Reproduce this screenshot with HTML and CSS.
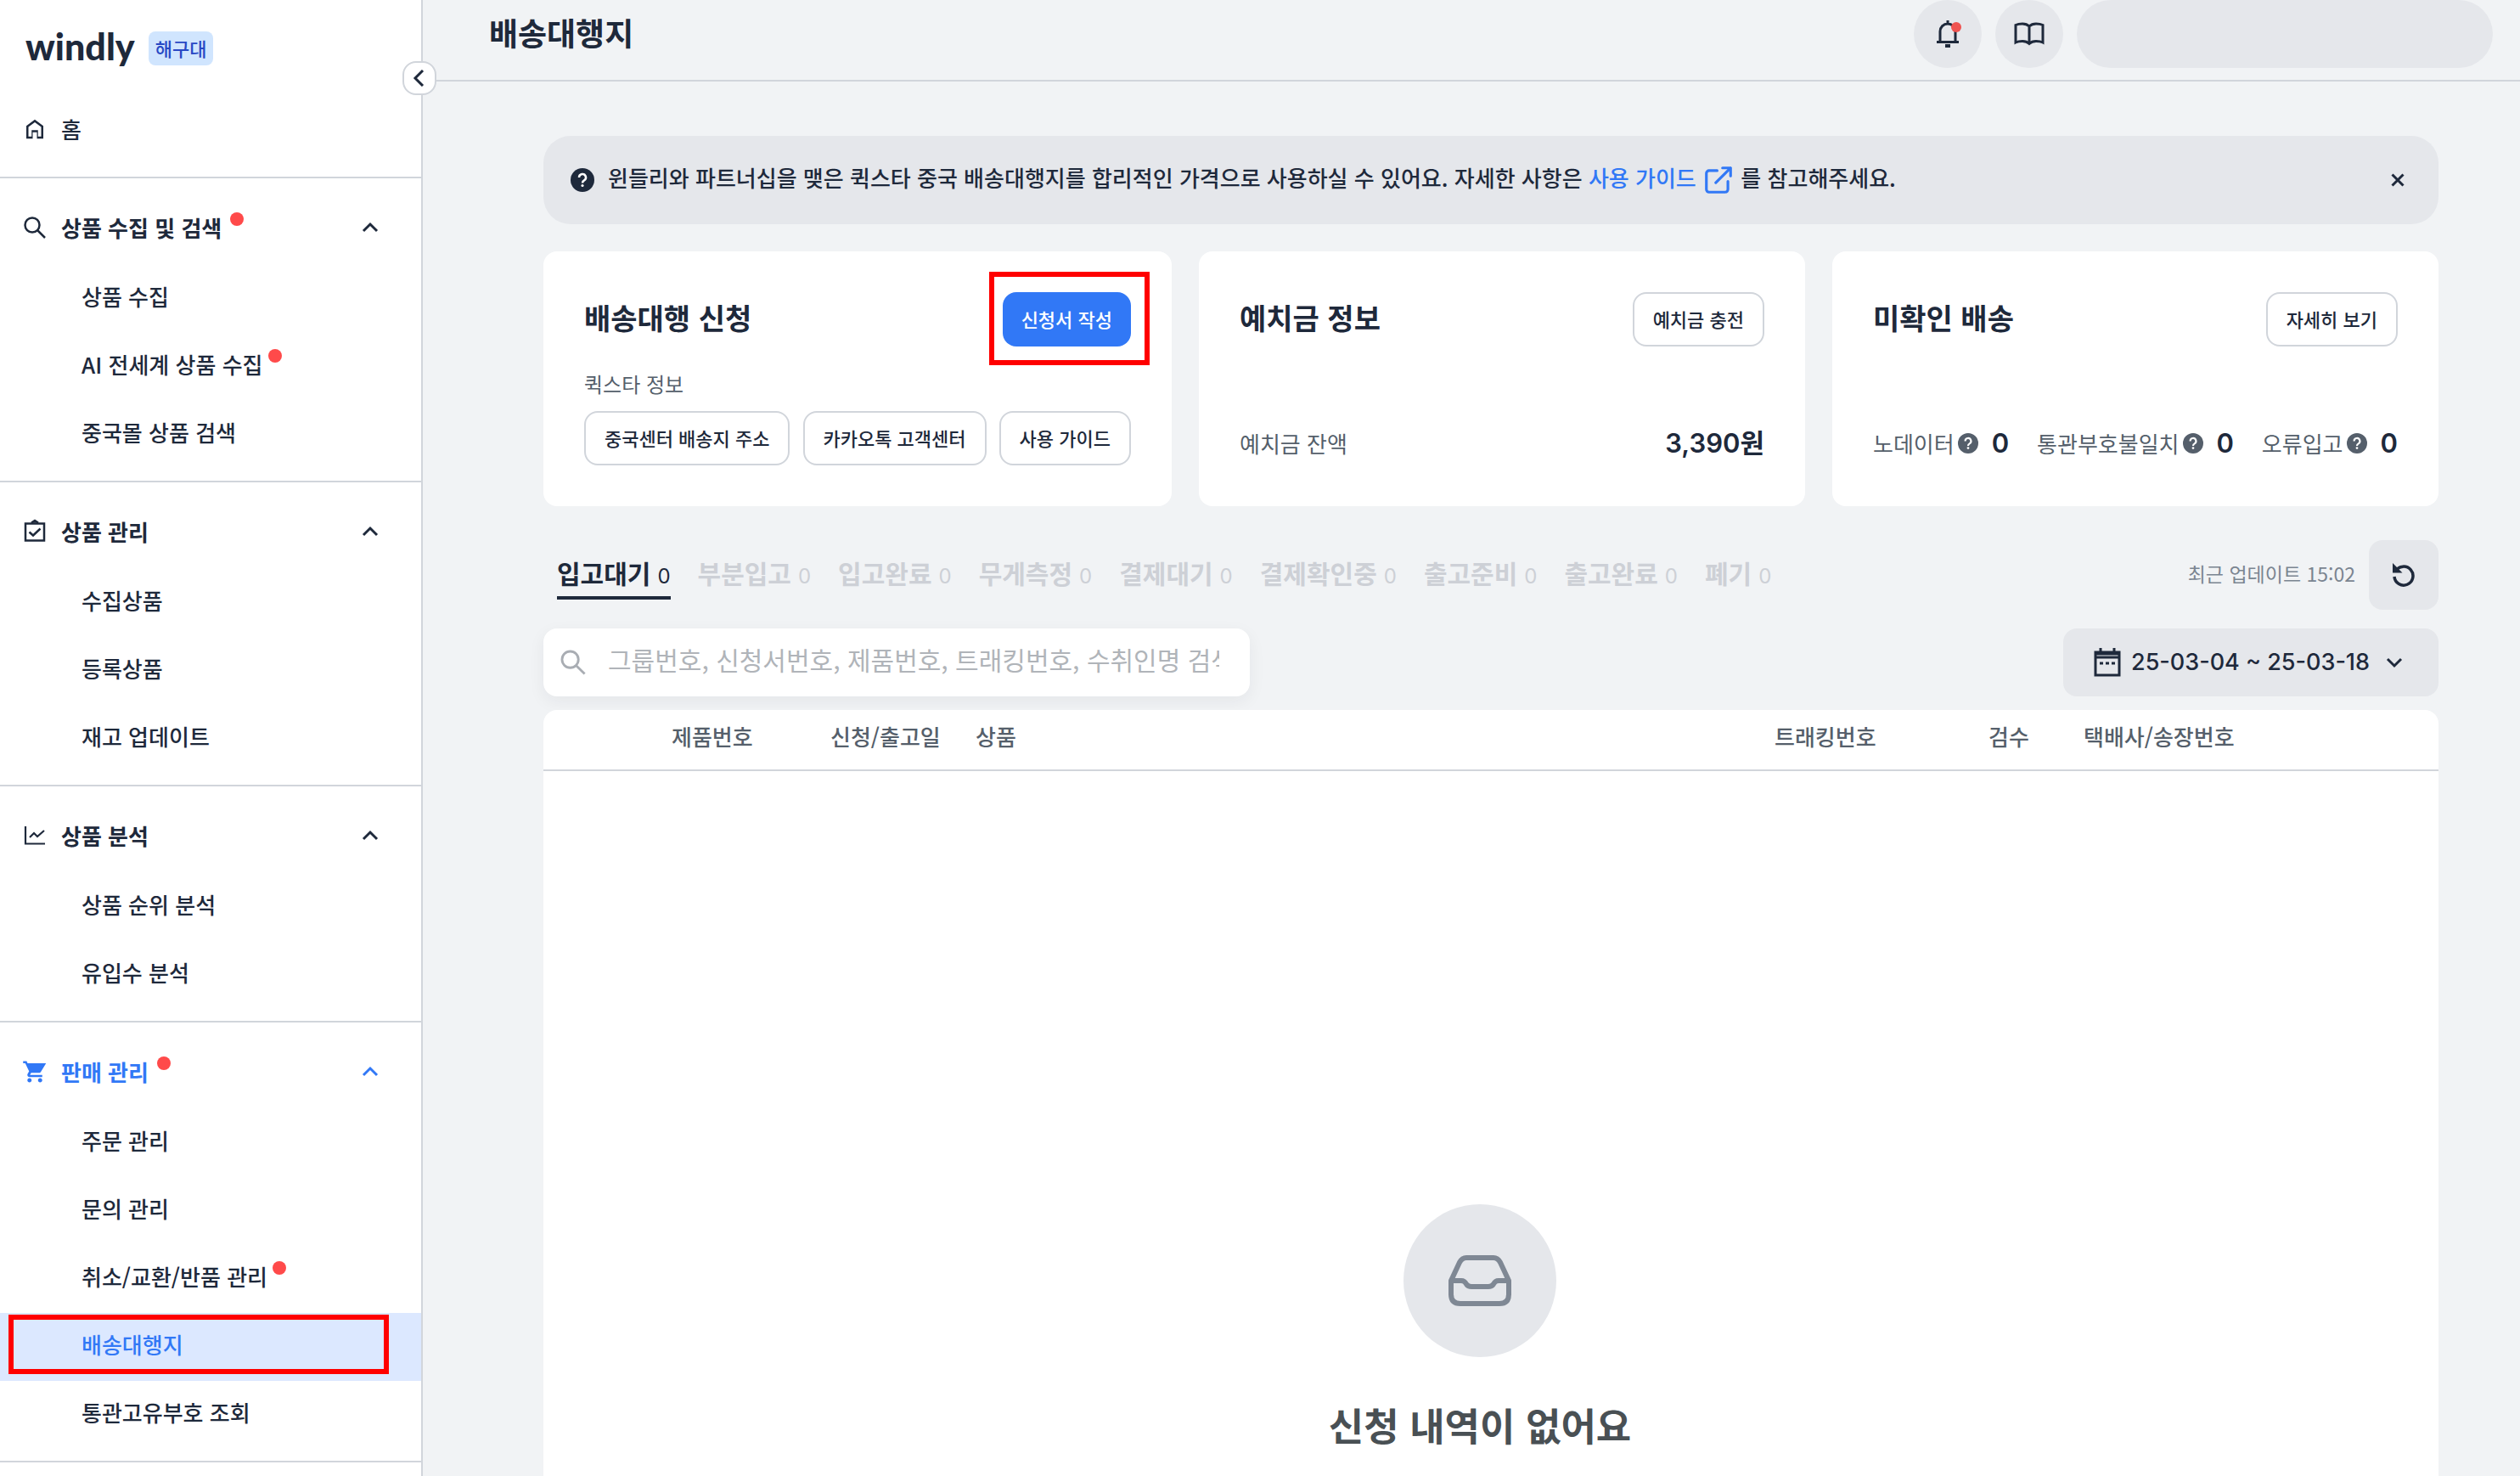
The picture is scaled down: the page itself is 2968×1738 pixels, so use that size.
FILE: index.html
```html
<!DOCTYPE html>
<html lang="ko">
<head>
    <meta charset="UTF-8">
    <meta name="viewport" content="width=device-width, initial-scale=1.0">
    <title>배송대행지 | windly</title>
    <link rel="stylesheet" href="styles.css">
</head>
<body>

<!-- Shared icons -->
<svg width="0" height="0" class="sprite" aria-hidden="true">
    <symbol id="chevron" viewBox="0 0 20 20">
        <path d="M2 14l8-8 8 8" fill="none" stroke="currentColor" stroke-width="3"/>
    </symbol>
    <symbol id="search" viewBox="0 0 30 30">
        <circle cx="12" cy="12" r="8.5" fill="none" stroke="currentColor" stroke-width="2.5"/>
        <path d="M18 18l9 9" fill="none" stroke="currentColor" stroke-width="2.5"/>
    </symbol>
    <symbol id="help" viewBox="0 0 28 28">
        <circle cx="14" cy="14" r="14" fill="currentColor"/>
        <path d="M10 11a4 4 0 1 1 6 3.400q-2 1.200-2 3" fill="none" stroke="#fff" stroke-width="2.500"/>
        <circle cx="14" cy="20.500" r="1.600" fill="#fff"/>
    </symbol>
</svg>

<aside class="sidebar">
    <div class="brand">
        <a href="#" class="logo">windly</a>
        <span class="badge">해구대</span>
    </div>
    <button class="collapse" aria-label="메뉴 접기">
        <svg viewBox="0 0 20 20"><path d="M14 1l-9 9 9 9" fill="none" stroke="currentColor" stroke-width="3"/></svg>
    </button>
    <nav>
        <a href="#" class="menu-head home">
            <svg class="menu-icon" viewBox="0 0 24 24"><path fill="currentColor" d="M6 19h3v-6h6v6h3v-9l-6-4.500L6 10zm-2 2V9l8-6 8 6v12h-6v-6h-4v6z"/></svg>
            홈
        </a>

        <div class="menu-group">
            <button class="menu-head">
                <svg class="menu-icon"><use href="#search"/></svg>
                상품 수집 및 검색<i class="dot"></i>
                <svg class="chevron"><use href="#chevron"/></svg>
            </button>
            <a href="#" class="menu-item">상품 수집</a>
            <a href="#" class="menu-item">AI 전세계 상품 수집<i class="dot"></i></a>
            <a href="#" class="menu-item">중국몰 상품 검색</a>
        </div>

        <div class="menu-group">
            <button class="menu-head">
                <svg class="menu-icon" viewBox="0 0 30 30" fill="none" stroke="currentColor" stroke-width="2.500"><path d="M4 5.500h22v20H4z"/><path d="M8.500 15.500l4.500 4 8.500-8"/><path d="M11 4.500l4-2.500 4 2.500" fill="currentColor"/></svg>
                상품 관리
                <svg class="chevron"><use href="#chevron"/></svg>
            </button>
            <a href="#" class="menu-item">수집상품</a>
            <a href="#" class="menu-item">등록상품</a>
            <a href="#" class="menu-item">재고 업데이트</a>
        </div>

        <div class="menu-group">
            <button class="menu-head">
                <svg class="menu-icon" viewBox="0 0 30 30" fill="none" stroke="currentColor" stroke-width="2.200"><path d="M4 4v20.500h23"/><path d="M9 17l5-5 4 4 8-7"/></svg>
                상품 분석
                <svg class="chevron"><use href="#chevron"/></svg>
            </button>
            <a href="#" class="menu-item">상품 순위 분석</a>
            <a href="#" class="menu-item">유입수 분석</a>
        </div>

        <div class="menu-group">
            <button class="menu-head current">
                <svg class="menu-icon" viewBox="0 0 24 24"><path fill="currentColor" d="M7 18c-1.100 0-2 .9-2 2s.9 2 2 2 2-.9 2-2-.9-2-2-2zM1 2v2h2l3.600 7.590-1.350 2.450C4.520 15.370 5.480 17 7 17h12v-2H7.420l1.120-2h7.450c.75 0 1.410-.41 1.750-1.030L22.600 4H5.210l-.94-2H1zm16 16c-1.100 0-2 .9-2 2s.9 2 2 2 2-.9 2-2-.9-2-2-2z"/></svg>
                판매 관리<i class="dot"></i>
                <svg class="chevron"><use href="#chevron"/></svg>
            </button>
            <a href="#" class="menu-item">주문 관리</a>
            <a href="#" class="menu-item">문의 관리</a>
            <a href="#" class="menu-item">취소/교환/반품 관리<i class="dot"></i></a>
            <a href="#" class="menu-item selected">배송대행지<span class="marker"></span></a>
            <a href="#" class="menu-item">통관고유부호 조회</a>
        </div>

        <div class="menu-group"></div>
    </nav>
</aside>

<main>
    <header class="topbar">
        <h1>배송대행지</h1>
        <div class="topbar-actions">
            <button class="round-btn" aria-label="알림">
                <svg viewBox="0 0 36 36" fill="none" stroke="currentColor" stroke-width="3"><path d="M5 27.500h26M9 27V15a9 9 0 0 1 18 0v12M18 6V2"/><path d="M15 32h6" stroke-width="4"/><circle cx="28" cy="10" r="6" fill="#ef5350" stroke="none"/></svg>
            </button>
            <button class="round-btn" aria-label="가이드">
                <svg viewBox="0 0 36 36" fill="none" stroke="currentColor" stroke-width="3"><path d="M18 9v20M18 9q-3-3-8-3-5 0-8 1.500V28q3-1.500 8-1.500 5 0 8 3 3-3 8-3 5 0 8 1.500V7.500Q31 6 26 6q-5 0-8 3z"/></svg>
            </button>
            <button class="profile" aria-label="프로필"></button>
        </div>
    </header>

    <div class="content">
        <section class="notice">
            <svg class="notice-icon"><use href="#help"/></svg>
            <p>윈들리와 파트너십을 맺은 퀵스타 중국 배송대행지를 합리적인 가격으로 사용하실 수 있어요. 자세한 사항은 <a href="#">사용 가이드 <svg viewBox="0 0 24 24" fill="none" stroke="currentColor" stroke-width="2" stroke-linecap="round" stroke-linejoin="round"><path d="M11 5H5a2 2 0 0 0-2 2v12a2 2 0 0 0 2 2h12a2 2 0 0 0 2-2v-6M15 3h6v6M10 14L21 3"/></svg></a> 를 참고해주세요.</p>
            <button class="close" aria-label="닫기">
                <svg viewBox="0 0 16 16" stroke="currentColor" stroke-width="3"><path d="M1.500 1.500l13 13M14.500 1.500l-13 13"/></svg>
            </button>
        </section>

        <section class="cards">
            <article class="card">
                <div class="card-head">
                    <h2>배송대행 신청</h2>
                    <div class="marked">
                        <button class="btn primary">신청서 작성</button>
                        <span class="marker"></span>
                    </div>
                </div>
                <p class="card-sub">퀵스타 정보</p>
                <div class="btn-row">
                    <button class="btn">중국센터 배송지 주소</button>
                    <button class="btn">카카오톡 고객센터</button>
                    <button class="btn">사용 가이드</button>
                </div>
            </article>

            <article class="card">
                <div class="card-head">
                    <h2>예치금 정보</h2>
                    <button class="btn">예치금 충전</button>
                </div>
                <div class="stats">
                    <span>예치금 잔액</span>
                    <strong>3,390원</strong>
                </div>
            </article>

            <article class="card">
                <div class="card-head">
                    <h2>미확인 배송</h2>
                    <button class="btn">자세히 보기</button>
                </div>
                <div class="stats">
                    <div class="stat">노데이터<svg><use href="#help"/></svg><strong>0</strong></div>
                    <div class="stat">통관부호불일치<svg><use href="#help"/></svg><strong>0</strong></div>
                    <div class="stat">오류입고<svg><use href="#help"/></svg><strong>0</strong></div>
                </div>
            </article>
        </section>

        <div class="tab-row">
            <div class="tabs">
                <button class="tab active">입고대기<span>0</span></button>
                <button class="tab">부분입고<span>0</span></button>
                <button class="tab">입고완료<span>0</span></button>
                <button class="tab">무게측정<span>0</span></button>
                <button class="tab">결제대기<span>0</span></button>
                <button class="tab">결제확인중<span>0</span></button>
                <button class="tab">출고준비<span>0</span></button>
                <button class="tab">출고완료<span>0</span></button>
                <button class="tab">폐기<span>0</span></button>
            </div>
            <div class="updated">
                <span>최근 업데이트 15:02</span>
                <button class="refresh" aria-label="새로고침">
                    <svg viewBox="0 0 28 28" fill="none" stroke="currentColor" stroke-width="3.500"><path d="M4.500 9.500A11 11 0 1 1 3 16"/><path d="M1 0v11.500h11.500z" fill="currentColor" stroke="none"/></svg>
                </button>
            </div>
        </div>

        <div class="filter-row">
            <label class="search">
                <svg><use href="#search"/></svg>
                <input type="text" aria-label="검색" placeholder="그룹번호, 신청서번호, 제품번호, 트래킹번호, 수취인명 검색">
            </label>
            <button class="date">
                <svg class="calendar" viewBox="0 0 32 36" fill="none" stroke="currentColor" stroke-width="3"><path d="M2 6h28v27H2zM8 1v6M24 1v6M2 12h28"/><path d="M7 19h4M14 19h4M21 19h4"/><path d="M2 7.500h28" stroke-width="4"/></svg>
                25-03-04 ~ 25-03-18
                <svg class="chevron down"><use href="#chevron"/></svg>
            </button>
        </div>

        <section class="list">
            <table>
                <colgroup>
                    <col class="col-check"><col class="col-no"><col class="col-date"><col><col class="col-track"><col class="col-inspect"><col class="col-invoice">
                </colgroup>
                <thead>
                    <tr>
                        <th></th>
                        <th>제품번호</th>
                        <th>신청/출고일</th>
                        <th>상품</th>
                        <th>트래킹번호</th>
                        <th>검수</th>
                        <th>택배사/송장번호</th>
                    </tr>
                </thead>
            </table>
            <div class="empty">
                <div class="empty-icon">
                    <svg viewBox="0 0 74 62" fill="none" stroke="currentColor" stroke-width="6" stroke-linejoin="round"><path d="M3 31L13 9.500Q16 4 21 4h32q5 0 8 5.500L71 31v16q0 11-11 11H14Q3 58 3 47zM3 31h12q4 0 6 4 2 3 6 3h20q4 0 6-3 2-4 6-4h12"/></svg>
                </div>
                <p>신청 내역이 없어요</p>
            </div>
        </section>
    </div>
</main>

</body>
</html>
```
FILE: styles.css
```css
:root {
    --ink: #1e293b;
    --gray: #555f6b;
    --line: #d1d5db;
    --fill: #e5e7eb;
    --bg: #f1f3f5;
    --blue: #3178f6;
    --mark: #ff0000;
}

* { box-sizing: border-box; }

body {
    margin: 0;
    display: flex;
    min-height: 100vh;
    font-family: "Noto Sans CJK KR", "Noto Sans", sans-serif;
    font-size: 26px;
    font-weight: 500;
    line-height: 36px;
    color: var(--ink);
    background: var(--bg);
}

button, input {
    font: inherit;
    color: inherit;
    border: none;
    background: none;
    padding: 0;
}

button { cursor: pointer; }
a { color: inherit; text-decoration: none; }
h1, h2, p { margin: 0; }
svg { display: block; flex-shrink: 0; }
.sprite { position: absolute; }

/* --- SIDEBAR --- */
.sidebar {
    position: relative;
    width: 498px;
    flex-shrink: 0;
    background: #fff;
    border-right: 2px solid var(--line);
}

.brand {
    display: flex;
    align-items: center;
    gap: 16px;
    height: 110px;
    padding: 0 30px;
}

.logo {
    font-family: Lato, sans-serif;
    font-size: 43px;
    font-weight: 900;
}

.badge {
    padding: 0 8px;
    margin-top: 4px;
    font-size: 22px;
    line-height: 38px;
    padding-bottom: 2px;
    border-radius: 8px;
    color: #2848c4;
    background: #d0e5fe;
}

.collapse {
    position: absolute;
    top: 72px;
    right: -18px;
    display: flex;
    align-items: center;
    justify-content: center;
    width: 40px;
    height: 40px;
    border: 2px solid var(--line);
    border-radius: 16px;
    background: #fff;
}

.collapse svg { width: 20px; height: 20px; }

.menu-head {
    display: flex;
    align-items: center;
    width: 100%;
    height: 86px;
    padding: 0 50px 2px 26px;
    font-weight: 700;
}

.menu-head.home { margin-bottom: 12px; font-weight: 500; }
.menu-head.current { color: var(--blue); }

.menu-icon {
    width: 30px;
    height: 30px;
    margin-right: 16px;
}

.chevron { width: 20px; height: 20px; margin-left: auto; }
.chevron.down { transform: rotate(180deg); }

.dot {
    width: 16px;
    height: 16px;
    margin: 0 0 20px 6px;
    border-radius: 50%;
    background: #ff4a4a;
}

.menu-head .dot { margin-left: 10px; }

.menu-group {
    border-top: 2px solid var(--line);
    padding: 16px 0 14px;
}

.menu-item {
    position: relative;
    display: flex;
    align-items: center;
    height: 80px;
    padding: 0 0 6px 96px;
}

.menu-item.selected { color: var(--blue); background: #dce8ff; }

.marker {
    position: absolute;
    border: 6px solid var(--mark);
    pointer-events: none;
}

.menu-item .marker { inset: 2px 38px 8px 10px; }

/* --- TOP BAR --- */
main {
    flex: 1;
    min-width: 0;
    display: flex;
    flex-direction: column;
}

.topbar {
    display: flex;
    justify-content: space-between;
    height: 96px;
    padding: 0 32px 0 78px;
    border-bottom: 2px solid var(--line);
}

h1 { font-size: 37px; line-height: 76px; }

.topbar-actions { display: flex; gap: 16px; }

.round-btn, .profile {
    display: flex;
    align-items: center;
    justify-content: center;
    width: 80px;
    height: 80px;
    border-radius: 40px;
    background: var(--fill);
}

.round-btn svg { width: 36px; height: 36px; }
.profile { width: 490px; }

/* --- CONTENT --- */
.content {
    flex: 1;
    display: flex;
    flex-direction: column;
    padding: 64px 96px 0 142px;
}

.notice {
    display: flex;
    align-items: center;
    height: 104px;
    padding: 0 40px 0 32px;
    border-radius: 32px;
    background: var(--fill);
}

.notice-icon { width: 28px; height: 28px; margin-right: 16px; }
.notice p { padding-bottom: 2px; }
.notice a { color: var(--blue); }

.notice p svg {
    display: inline-block;
    width: 38px;
    height: 38px;
    vertical-align: middle;
}

.close { margin-left: auto; }
.close svg { width: 16px; height: 16px; }

/* --- CARDS --- */
.cards {
    display: grid;
    grid-template-columns: 740px 1fr 1fr;
    gap: 32px;
    margin-top: 32px;
}

.card {
    display: flex;
    flex-direction: column;
    height: 300px;
    padding: 48px;
    border-radius: 16px;
    background: #fff;
}

.card-head {
    display: flex;
    align-items: center;
    justify-content: space-between;
    height: 64px;
}

h2 { font-size: 34px; line-height: 60px; padding-bottom: 4px; }

.btn {
    height: 64px;
    padding: 0 22px 2px;
    font-size: 22px;
    white-space: nowrap;
    border: 2px solid var(--line);
    border-radius: 16px;
    background: #fff;
}

.btn.primary {
    border: none;
    color: #fff;
    background: var(--blue);
}

.marked { position: relative; }
.marked .marker { inset: -24px -22px -22px -16px; }

.card-sub {
    margin-top: 26px;
    font-size: 24px;
    font-weight: 400;
    color: var(--gray);
}

.btn-row {
    display: flex;
    justify-content: space-between;
    margin-top: 14px;
}

.stats {
    display: flex;
    align-items: center;
    justify-content: space-between;
    margin-top: auto;
    padding-bottom: 8px;
    font-weight: 400;
    color: var(--gray);
}

.stat { display: flex; align-items: center; }
.stat svg { width: 24px; height: 24px; margin: 0 16px 0 4px; }

.stats strong {
    font-family: Inter, "Noto Sans CJK KR", sans-serif;
    font-size: 31px;
    font-weight: 600;
    color: var(--ink);
}

/* --- TABS --- */
.tab-row {
    display: flex;
    align-items: center;
    justify-content: space-between;
    margin-top: 40px;
}

.tabs { display: flex; gap: 32px; padding-left: 16px; }

.tab {
    display: flex;
    align-items: baseline;
    gap: 8px;
    padding-top: 2px;
    font-size: 30px;
    font-weight: 700;
    line-height: 46px;
    color: #cdd0d6;
    border-bottom: 4px solid transparent;
}

.tab span {
    font-family: Inter, sans-serif;
    font-size: 24px;
    font-weight: 400;
}

.tab.active { color: var(--ink); border-color: var(--ink); }

.updated {
    display: flex;
    align-items: center;
    gap: 16px;
    font-size: 23px;
    font-weight: 400;
    color: #7b8591;
}

.updated span { padding-bottom: 4px; }

.refresh {
    display: flex;
    align-items: center;
    justify-content: center;
    width: 82px;
    height: 82px;
    border-radius: 16px;
    color: var(--ink);
    background: var(--fill);
}

.refresh svg { width: 28px; height: 28px; }

/* --- FILTERS --- */
.filter-row {
    display: flex;
    justify-content: space-between;
    margin-top: 22px;
}

.search {
    display: flex;
    align-items: center;
    width: 832px;
    height: 80px;
    padding: 0 36px 0 18px;
    border-radius: 16px;
    color: #a9adb3;
    background: #fff;
    box-shadow: 0 6px 20px rgba(30, 41, 59, 0.06);
}

.search svg { width: 34px; height: 34px; margin-right: 24px; }

.search input {
    flex: 1;
    min-width: 0;
    padding-bottom: 8px;
    font-size: 30px;
    font-weight: 400;
    outline: none;
}

.search input::placeholder { color: #b0b4b9; }

.date {
    display: flex;
    align-items: center;
    width: 442px;
    height: 80px;
    padding: 0 42px 0 36px;
    font-family: Inter, sans-serif;
    font-size: 27px;
    border-radius: 16px;
    background: var(--fill);
}

.calendar { width: 32px; height: 36px; margin-right: 12px; }

/* --- TABLE --- */
.list {
    flex: 1;
    margin-top: 16px;
    border-radius: 16px 16px 0 0;
    background: #fff;
}

table {
    width: 100%;
    table-layout: fixed;
    border-collapse: collapse;
}

th {
    height: 71px;
    padding: 0 0 8px;
    font-weight: 500;
    text-align: left;
    color: var(--gray);
    border-bottom: 2px solid var(--line);
}

.col-check { width: 151px; }
.col-no { width: 187px; }
.col-date { width: 171px; }
.col-track { width: 252px; }
.col-inspect { width: 112px; }
.col-invoice { width: 418px; }

.empty {
    display: flex;
    flex-direction: column;
    align-items: center;
    padding: 510px 26px 0 0;
}

.empty-icon {
    display: flex;
    align-items: center;
    justify-content: center;
    width: 180px;
    height: 180px;
    border-radius: 50%;
    color: #7f8894;
    background: var(--fill);
}

.empty-icon svg { width: 74px; height: 62px; }

.empty p {
    margin-top: 46px;
    font-size: 45px;
    font-weight: 700;
    line-height: 68px;
    color: #495054;
}
```
